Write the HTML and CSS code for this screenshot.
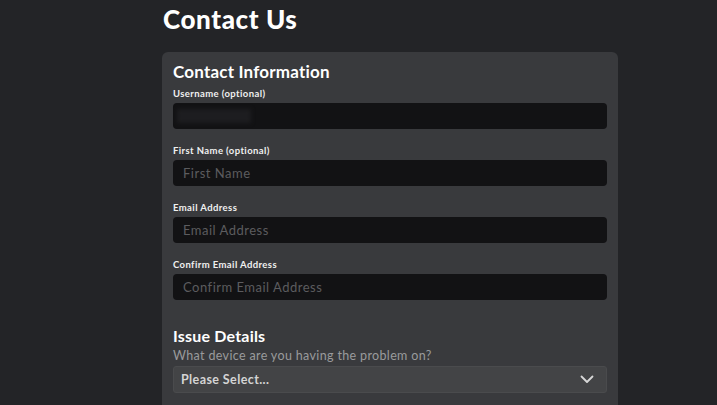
FILE: index.html
```html
<!DOCTYPE html>
<html lang="en">
<head>
    <meta charset="UTF-8">
    <meta name="viewport" content="width=device-width, initial-scale=1.0">
    <title>Contact Us</title>
    <link rel="stylesheet" href="styles.css">
</head>
<body>

    <div class="page">
        <h1 class="page-title">Contact Us</h1>

        <form class="card">
            <h2 class="section-title">Contact Information</h2>

            <div class="field">
                <label class="field-label" for="username">Username (optional)</label>
                <div class="input input-filled" id="username">
                    <span class="blurred"></span>
                </div>
            </div>

            <div class="field">
                <label class="field-label" for="firstName">First Name (optional)</label>
                <input class="input" type="text" id="firstName" placeholder="First Name">
            </div>

            <div class="field">
                <label class="field-label" for="email">Email Address</label>
                <input class="input" type="text" id="email" placeholder="Email Address">
            </div>

            <div class="field">
                <label class="field-label" for="confirmEmail">Confirm Email Address</label>
                <input class="input" type="text" id="confirmEmail" placeholder="Confirm Email Address">
            </div>

            <h2 class="section-title issue-title">Issue Details</h2>
            <p class="question">What device are you having the problem on?</p>
            <div class="select">
                <span>Please Select...</span>
                <svg class="chevron" width="14" height="9" viewBox="0 0 14 9">
                    <path d="M1.5 1.5 L7 7 L12.5 1.5" fill="none" stroke="#d8d8d8" stroke-width="1.8" stroke-linecap="round" stroke-linejoin="round"/>
                </svg>
            </div>
        </form>
    </div>

</body>
</html>
```

FILE: styles.css
```css
body {
    margin: 0;
    padding: 0;
    font-family: Lato, "Open Sans", Arial, sans-serif;
    background-color: #232427;
    color: #ffffff;
    overflow: hidden;
    height: 405px;
}

.page {
    margin-left: 162px;
    width: 456px;
}

.page-title {
    margin: 0;
    padding: 4px 0 0 1px;
    font-size: 26px;
    font-weight: 900;
    line-height: 30px;
    height: 48px;
    letter-spacing: 0.6px;
}

/* Card with the form */
.card {
    background-color: #393a3d;
    border-radius: 6px;
    padding: 10px 11px 0 11px;
    height: 360px;
    box-sizing: border-box;
}

.section-title {
    margin: 0 0 5px 0;
    font-size: 17px;
    font-weight: 700;
    line-height: 20px;
    letter-spacing: 0.2px;
}

.field {
    margin-bottom: 15px;
}

.field-label {
    display: block;
    font-size: 9.5px;
    font-weight: 700;
    line-height: 13px;
    letter-spacing: 0.4px;
    color: #f0f0f0;
    margin-bottom: 3px;
}

.input {
    display: block;
    box-sizing: border-box;
    width: 100%;
    height: 26px;
    border: none;
    border-radius: 4px;
    background-color: #121214;
    padding: 0 10px;
    font-family: inherit;
    font-size: 13px;
    letter-spacing: 0.5px;
    color: #ffffff;
    outline: none;
}

.input::placeholder {
    color: #5c5c5f;
}

.input-filled {
    display: flex;
    align-items: center;
    padding: 0 4px;
}

.blurred {
    display: block;
    width: 74px;
    height: 14px;
    background-color: #1d1d20;
    filter: blur(2px);
}

.issue-title {
    margin-top: 26px;
    margin-bottom: 3px;
    font-size: 16px;
}

.question {
    margin: 0 0 3px 0;
    font-size: 12.5px;
    line-height: 14px;
    letter-spacing: 0.35px;
    color: #9a9a9c;
}

.select {
    display: flex;
    align-items: center;
    justify-content: space-between;
    height: 27px;
    box-sizing: border-box;
    padding: 0 12px 0 7px;
    background-color: #434446;
    border-radius: 3px;
    border: 1px solid #4a4b4d;
    font-size: 12.5px;
    font-weight: 700;
    letter-spacing: 0.4px;
    color: #d4d4d4;
}
```
